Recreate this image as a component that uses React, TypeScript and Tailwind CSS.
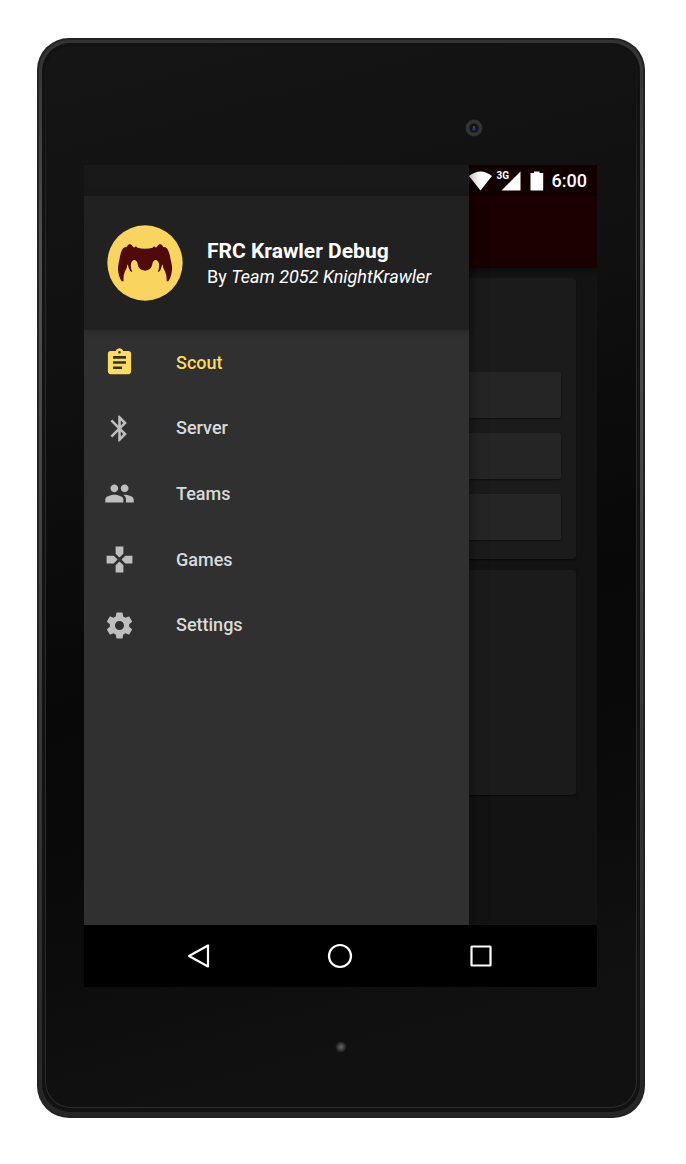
import type { ReactNode } from "react";
import { MdAssignment, MdBluetooth, MdGames, MdPeople } from "react-icons/md";

function SettingsIcon() {
  return (
    <svg viewBox="0 0 24 24" className="size-full" fill="currentColor" aria-hidden="true">
      <path d="M19.43 12.98c.04-.32.07-.64.07-.98s-.03-.66-.07-.98l2.11-1.65c.19-.15.24-.42.12-.64l-2-3.46c-.12-.22-.39-.3-.61-.22l-2.49 1c-.52-.4-1.08-.73-1.69-.98l-.38-2.65C14.46 2.18 14.25 2 14 2h-4c-.25 0-.46.18-.49.42l-.38 2.65c-.61.25-1.17.59-1.69.98l-2.49-1c-.23-.09-.49 0-.61.22l-2 3.46c-.13.22-.07.49.12.64l2.11 1.65c-.04.32-.07.65-.07.98s.03.66.07.98l-2.11 1.65c-.19.15-.24.42-.12.64l2 3.46c.12.22.39.3.61.22l2.49-1c.52.4 1.08.73 1.69.98l.38 2.65c.03.24.24.42.49.42h4c.25 0 .46-.18.49-.42l.38-2.65c.61-.25 1.17-.59 1.69-.98l2.49 1c.23.09.49 0 .61-.22l2-3.46c.12-.22.07-.49-.12-.64l-2.11-1.65zM12 15.5c-1.93 0-3.5-1.57-3.5-3.5s1.57-3.5 3.5-3.5 3.5 1.57 3.5 3.5-1.57 3.5-3.5 3.5z" />
    </svg>
  );
}

function Mascot() {
  return (
    <svg viewBox="37 28 228 228" className="size-[76px] shrink-0" aria-hidden="true">
      <circle cx="151" cy="142" r="113" fill="#f9d45f" />
      <path
        fill="#510a0a"
        d="M76 122 C79 107 83 98 90 95 L96 94 Q99 87 106 85 Q112 87 114 92 L118 96 Q122 91 126 93 L128 96 Q151 102 174 96 L176 93 Q180 91 184 96 L188 92 Q190 87 196 85 Q203 87 206 94 L212 95 C219 98 223 107 226 122 C228 136 234 150 232 163 Q230 184 221 197 L216 197 Q217 180 211 167 Q204 157 204 146 Q201 150 200 156 Q198 166 189 170 Q195 157 193 145 Q191 134 183 133 Q175 134 173 145 Q170 164 151 165 Q132 164 129 145 Q127 134 119 133 Q111 134 109 145 Q107 157 113 170 Q104 166 102 156 Q101 150 98 146 Q98 157 91 167 Q85 180 87 197 L81 197 Q72 184 70 163 C69 150 74 136 76 122 Z"
      />
    </svg>
  );
}

const menu: { label: string; icon: ReactNode; active?: boolean }[] = [
  { label: "Scout", icon: <MdAssignment className="size-full" />, active: true },
  { label: "Server", icon: <MdBluetooth className="size-full" /> },
  { label: "Teams", icon: <MdPeople className="size-full" /> },
  { label: "Games", icon: <MdGames className="size-full" /> },
  { label: "Settings", icon: <SettingsIcon /> },
];

function StatusBar() {
  return (
    <div className="flex h-[31px] items-center justify-end bg-[#120000] pr-[10px] text-white">
      <svg viewBox="0 0 23 20" className="h-5 w-[23px]" fill="currentColor" aria-hidden="true">
        <path d="M0 5 Q11.500 -4 23 5 L11.500 19.500 Z" />
      </svg>
      <div className="relative ml-[5px] h-5 w-6">
        <svg viewBox="0 0 24 20" className="h-5 w-6" fill="currentColor" aria-hidden="true">
          <path d="M23.500 0.500 V19.500 H4.500 Z" />
        </svg>
        <span className="absolute left-0 top-0 text-[10px] leading-[10px] font-bold">3G</span>
      </div>
      <svg viewBox="0 0 14 20" className="ml-[9px] h-5 w-[14px]" fill="currentColor" aria-hidden="true">
        <path d="M4 0.500 H9.500 V2 H13.200 V19.500 H0.500 V2 H4 Z" />
      </svg>
      <span className="ml-2 text-[18px] leading-5 font-medium">6:00</span>
    </div>
  );
}

function Drawer() {
  return (
    <aside className="z-10 col-start-1 row-start-1 flex w-3/4 flex-col bg-[#303030] shadow-[0_0_14px_rgba(0,0,0,0.55)]">
      <div className="h-[31px] bg-[#191919]" />
      <header className="flex h-[134px] items-center gap-6 bg-[#212121] pl-[23px] shadow-[0_1px_6px_rgba(0,0,0,0.25)]">
        <Mascot />
        <div className="pt-[2px] whitespace-nowrap text-white">
          <h1 className="text-[21px] leading-[26px] font-bold">FRC Krawler Debug</h1>
          <p className="text-[18px] leading-[26px]">
            By <em>Team 2052 KnightKrawler</em>
          </p>
        </div>
      </header>
      <nav>
        <ul className="grid h-[328px] grid-rows-5">
          {menu.map((item) => (
            <li key={item.label} className="grid">
              <a
                href={"#" + item.label.toLowerCase()}
                className={
                  item.active
                    ? "flex items-center gap-[41px] pl-5 text-[18px] leading-6 font-medium text-[#fbdc5f]"
                    : "flex items-center gap-[41px] pl-5 text-[18px] leading-6 font-medium text-[#dadada]"
                }
              >
                <span className={item.active ? "size-[31px]" : "size-[31px] text-[#bebebe]"}>{item.icon}</span>
                {item.label}
              </a>
            </li>
          ))}
        </ul>
      </nav>
    </aside>
  );
}

function Backdrop() {
  return (
    <div className="col-start-1 row-start-1 flex flex-col bg-[#131313]">
      <StatusBar />
      <div className="h-[72px] bg-[#1a0000] shadow-[0_2px_5px_rgba(0,0,0,0.4)]" />
      <main className="flex flex-col gap-[11px] pt-[10px] pr-[21px] pl-5">
        <section className="flex flex-col gap-[15px] rounded-[3px] bg-[#1b1b1b] px-[15px] pt-[94px] pb-[19px] shadow-[0_1px_2px_rgba(0,0,0,0.6)]">
          <div className="h-[46px] rounded-[2px] bg-[#252525] shadow-[0_1px_2px_rgba(0,0,0,0.5)]" />
          <div className="h-[46px] rounded-[2px] bg-[#252525] shadow-[0_1px_2px_rgba(0,0,0,0.5)]" />
          <div className="h-[46px] rounded-[2px] bg-[#252525] shadow-[0_1px_2px_rgba(0,0,0,0.5)]" />
        </section>
        <section className="h-[225px] rounded-[3px] bg-[#1b1b1b] shadow-[0_1px_2px_rgba(0,0,0,0.6)]" />
      </main>
    </div>
  );
}

function SystemNav() {
  return (
    <div className="flex h-[62px] items-center justify-center gap-[101px] bg-black pr-px text-white">
      <button type="button" aria-label="Back" className="size-10">
        <svg viewBox="0 0 40 40" className="size-full" fill="none" stroke="currentColor" strokeWidth="2.200" strokeLinejoin="round">
          <path d="M29 9.500 V30.500 L10 20 Z" />
        </svg>
      </button>
      <button type="button" aria-label="Home" className="size-10">
        <svg viewBox="0 0 40 40" className="size-full" fill="none" stroke="currentColor" strokeWidth="2.200">
          <circle cx="20" cy="20" r="11" />
        </svg>
      </button>
      <button type="button" aria-label="Recent apps" className="size-10">
        <svg viewBox="0 0 40 40" className="size-full" fill="none" stroke="currentColor" strokeWidth="2.200" strokeLinejoin="round">
          <rect x="10.500" y="10.500" width="19" height="19" rx="0.500" />
        </svg>
      </button>
    </div>
  );
}

function Camera() {
  return (
    <svg viewBox="0 0 18 18" className="size-[18px]" aria-hidden="true">
      <circle cx="9" cy="9" r="8.500" fill="#303030" />
      <circle cx="9" cy="9" r="6.500" fill="none" stroke="#3c3c3c" strokeWidth="1.500" strokeDasharray="1.500 1" />
      <circle cx="9" cy="9" r="4.500" fill="#141418" />
      <circle cx="9" cy="10" r="1.800" fill="#263276" />
      <circle cx="9" cy="8" r="0.800" fill="#77777f" />
    </svg>
  );
}

export default function App() {
  return (
    <div className="min-h-screen bg-white pt-[38px] pr-[41px] pb-[46px] pl-[37px] font-['Roboto',sans-serif]">
      <div className="rounded-[32px] bg-[#222222] p-[2px]">
        <div className="rounded-[30px] bg-linear-to-b from-[#333333] via-[#505050] via-20% to-[#262626] px-[3px] pt-[3px] pb-[4px]">
          <div className="rounded-[28px] bg-[#121212] px-[3px] pt-[3px] pb-[4px]">
            <div className="rounded-[26px] bg-linear-to-b from-[#141414] via-[#2b2b2b] via-20% to-[#2b2b2b] p-px">
              <div className="rounded-[25px] bg-[linear-gradient(165deg,#151515_0%,#111111_25%,#080808_55%,#0a0a0a_70%,#111111_90%)] pr-[39px] pl-[38px]">
                <div className="flex h-[118px] items-center justify-end pt-[44px] pr-[114px]">
                  <Camera />
                </div>
                <div>
                  <div className="grid aspect-[513/760] overflow-hidden">
                    <Backdrop />
                    <Drawer />
                  </div>
                  <SystemNav />
                </div>
                <div className="flex h-[120px] items-center justify-center">
                  <div className="size-3 rounded-full bg-[radial-gradient(circle,#666666_0%,#444444_30%,transparent_70%)]" />
                </div>
              </div>
            </div>
          </div>
        </div>
      </div>
    </div>
  );
}
